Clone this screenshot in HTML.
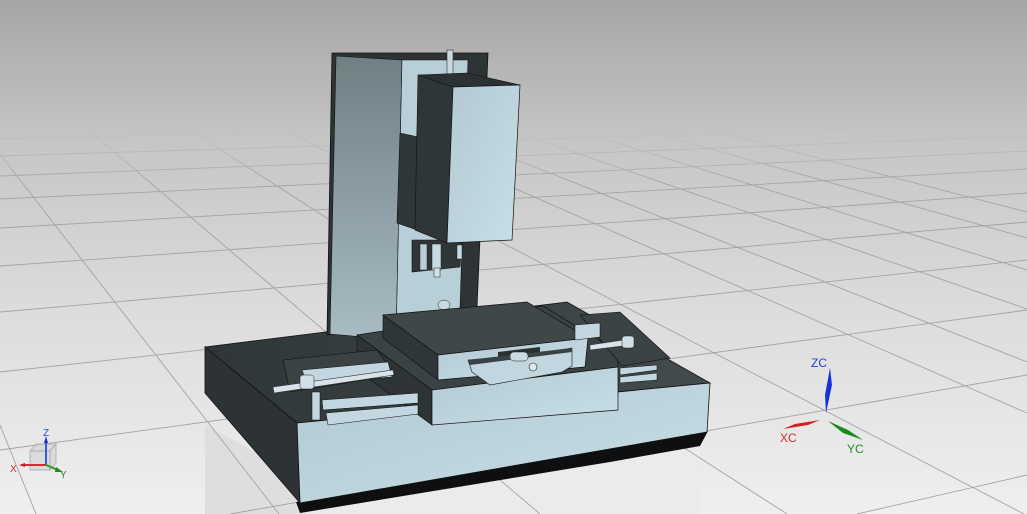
<!DOCTYPE html>
<html><head><meta charset="utf-8"><style>
html,body{margin:0;padding:0;width:1027px;height:514px;overflow:hidden;background:#ddd}
svg{display:block}
text{font-family:"Liberation Sans",sans-serif}
</style></head><body>
<svg width="1027" height="514" viewBox="0 0 1027 514" xmlns="http://www.w3.org/2000/svg">
<defs>
<linearGradient id="bg" x1="0" y1="0" x2="0" y2="1">
<stop offset="0" stop-color="#a6a6a6"/>
<stop offset="0.28" stop-color="#c6c6c6"/>
<stop offset="0.6" stop-color="#dcdcdc"/>
<stop offset="1" stop-color="#efefef"/>
</linearGradient>
<linearGradient id="fade" x1="0" y1="0" x2="0" y2="514" gradientUnits="userSpaceOnUse">
<stop offset="0" stop-color="#fff" stop-opacity="0"/>
<stop offset="0.25" stop-color="#fff" stop-opacity="0"/>
<stop offset="0.36" stop-color="#fff" stop-opacity="1"/>
<stop offset="1" stop-color="#fff" stop-opacity="1"/>
</linearGradient>
<mask id="gm"><rect width="1027" height="514" fill="url(#fade)"/></mask>
<linearGradient id="colL" x1="0" y1="0" x2="0" y2="1">
<stop offset="0" stop-color="#6f7f84"/>
<stop offset="1" stop-color="#a9bcc4"/>
</linearGradient>
<linearGradient id="lt" x1="0" y1="0" x2="1" y2="1">
<stop offset="0" stop-color="#b3c9d2"/>
<stop offset="1" stop-color="#c9dfe8"/>
</linearGradient>
<linearGradient id="dk" x1="0" y1="0" x2="1" y2="0">
<stop offset="0" stop-color="#2f3638"/>
<stop offset="1" stop-color="#434b4d"/>
</linearGradient>
</defs>
<rect width="1027" height="514" fill="url(#bg)"/>
<polygon points="205,425 300,475 300,514 205,514" fill="#dedede"/>
<polygon points="300,495 700,445 700,514 300,514" fill="#ebebeb"/>
<g mask="url(#gm)">
<g stroke="#a4a4a4" stroke-width="0.9" fill="none">
<line x1="0" y1="139" x2="1027" y2="113"/>
<line x1="0" y1="156" x2="1027" y2="124"/>
<line x1="0" y1="176" x2="1027" y2="136"/>
<line x1="0" y1="199" x2="1027" y2="151"/>
<line x1="0" y1="228" x2="1027" y2="169"/>
<line x1="0" y1="266" x2="1027" y2="193"/>
<line x1="0" y1="312" x2="1027" y2="222"/>
<line x1="0" y1="372" x2="1027" y2="260"/>
<line x1="0" y1="450" x2="1027" y2="310"/>
<line x1="230" y1="514" x2="1027" y2="375"/>
<line x1="857" y1="514" x2="1027" y2="475"/>
</g>
<g stroke="#a4a4a4" stroke-width="0.9" fill="none">
<line x1="0" y1="425" x2="36" y2="514"/>
<line x1="0" y1="154" x2="279" y2="514"/>
<line x1="0" y1="55" x2="540" y2="514"/>
<line x1="78" y1="58" x2="787" y2="514"/>
<line x1="160" y1="65" x2="1024" y2="514"/>
<line x1="240" y1="68" x2="1027" y2="413"/>
<line x1="300" y1="74" x2="1027" y2="362"/>
<line x1="360" y1="78" x2="1027" y2="309"/>
<line x1="420" y1="82" x2="1027" y2="270"/>
<line x1="480" y1="84" x2="1027" y2="238"/>
<line x1="540" y1="86" x2="1027" y2="212"/>
</g>
</g>

<polygon points="296,502 708,431 700,446 610,462 300,513" fill="#0d0f10"/>
<polygon points="205,347 567,302 710,383 297,423" fill="url(#dk)" stroke="#111" stroke-width="0.8"/>
<polygon points="205,347 297,423 300,503 205,393" fill="#2d3335" stroke="#111" stroke-width="0.8"/>
<polygon points="297,423 710,383 707,432 300,503" fill="url(#lt)" stroke="#111" stroke-width="0.8"/>

<polygon points="332,53 488,53 477,307 327,335" fill="#2e3436" stroke="#111" stroke-width="0.8"/>
<polygon points="336,56 402,60 396,340 330,334" fill="url(#colL)" stroke="#111" stroke-width="0.6"/>
<polygon points="402,60 468,60 460,308 396,340" fill="#b9cfd8" stroke="#111" stroke-width="0.6"/>
<polygon points="400,133 418,137 417,230 397,223" fill="#2f3638" stroke="#111" stroke-width="0.6"/>
<polygon points="412,240 462,240 460,267 412,272" fill="#2f3638" stroke="#111" stroke-width="0.6"/>
<rect x="420" y="244" width="7" height="26" fill="#b9cfd8" stroke="#222" stroke-width="0.5"/>
<rect x="432" y="244" width="9" height="26" fill="#c7dbe3" stroke="#222" stroke-width="0.5"/>
<rect x="434" y="268" width="6" height="9" fill="#d0e2ea" stroke="#222" stroke-width="0.5"/>
<rect x="457" y="245" width="5" height="14" fill="#c7dbe3" stroke="#222" stroke-width="0.5"/>
<rect x="447" y="50" width="6" height="28" fill="#c8d8de" stroke="#333" stroke-width="0.6"/>
<polygon points="418,75 467,73 520,85 453,87" fill="#2c3234" stroke="#111" stroke-width="0.6"/>
<polygon points="418,75 453,87 447,243 415,230" fill="#2f3638" stroke="#111" stroke-width="0.6"/>
<polygon points="453,87 520,85 512,240 447,243" fill="url(#lt)" stroke="#111" stroke-width="0.7"/>
<ellipse cx="444" cy="305" rx="6" ry="5" fill="#c8d9e0" stroke="#222" stroke-width="0.5"/>

<polygon points="357,335 543,306 618,352 618,367 432,390" fill="#3a4244" stroke="#111" stroke-width="0.7"/>
<polygon points="357,335 432,390 432,425 357,370" fill="#2e3436" stroke="#111" stroke-width="0.6"/>
<polygon points="432,390 618,367 618,410 432,425" fill="url(#lt)" stroke="#111" stroke-width="0.7"/>
<polygon points="580,315 620,312 670,358 622,366" fill="#3a4244" stroke="#111" stroke-width="0.6"/>
<polygon points="383,315 527,302 588,338 438,355" fill="#3f4749" stroke="#111" stroke-width="0.7"/>
<polygon points="383,315 438,355 438,380 383,338" fill="#2f3638" stroke="#111" stroke-width="0.6"/>
<polygon points="438,355 588,338 585,367 438,380" fill="url(#lt)" stroke="#111" stroke-width="0.7"/>
<polygon points="498,352 540,347 540,358 498,362" fill="#2b3133"/>
<polygon points="468,360 500,357 540,353 572,348 572,366 562,372 490,385 472,372" fill="#c2d6df" stroke="#111" stroke-width="0.6"/>
<polygon points="468,360 572,348 572,352 470,365" fill="#3a4244"/>
<rect x="510" y="352" width="18" height="9" rx="4" fill="#c9dae1" stroke="#222" stroke-width="0.5"/>
<circle cx="533" cy="367" r="4" fill="#dce8ee" stroke="#222" stroke-width="0.6"/>

<polygon points="283,360 377,350 395,375 290,392" fill="#3a4244" stroke="#111" stroke-width="0.6"/>
<polygon points="302,370 388,362 392,377 307,383" fill="#c3d7e0" stroke="#111" stroke-width="0.5"/>
<polygon points="322,400 418,393 418,403 323,410" fill="#c3d7e0" stroke="#111" stroke-width="0.5"/>
<polygon points="326,413 418,405 418,414 328,425" fill="#c3d7e0" stroke="#111" stroke-width="0.5"/>
<rect x="312" y="392" width="8" height="28" fill="#c3d7e0" stroke="#111" stroke-width="0.5"/>
<polygon points="273,387 393,370 394,375 274,393" fill="#d8e4e9" stroke="#333" stroke-width="0.6"/>
<rect x="300" y="375" width="14" height="14" rx="3" fill="#d0dee5" stroke="#222" stroke-width="0.5"/>
<polygon points="620,368 657,365 657,370 620,375" fill="#c3d7e0" stroke="#111" stroke-width="0.5"/>
<polygon points="620,377 657,373 657,380 620,383" fill="#c3d7e0" stroke="#111" stroke-width="0.5"/>
<polygon points="575,325 600,323 600,337 575,340" fill="#c3d7e0" stroke="#111" stroke-width="0.5"/>
<polygon points="590,345 630,339 630,345 590,350" fill="#d8e4e9" stroke="#333" stroke-width="0.6"/>
<rect x="622" y="336" width="12" height="12" rx="3" fill="#d0dee5" stroke="#222" stroke-width="0.5"/>

<polygon points="830,368 832,385 826,413 825,395" fill="#1634d4"/>
<text x="811" y="367" font-size="12" fill="#2040e0">ZC</text>
<polygon points="820,420 808,425 783,429 795,424" fill="#d42020"/>
<text x="780" y="442" font-size="12" fill="#d03030">XC</text>
<polygon points="828,421 848,430 863,440 843,433" fill="#1a8a1a"/>
<text x="847" y="453" font-size="12" fill="#2a8a2a">YC</text>

<g stroke="#a8a8a8" stroke-width="0.8" fill="#d0d0d0" fill-opacity="0.6">
<polygon points="30,451 36,444 56,444 50,451"/>
<polygon points="50,451 56,444 56,463 50,470"/>
<rect x="30" y="451" width="20" height="19"/>
</g>
<line x1="46" y1="465" x2="46" y2="441" stroke="#3a5ad8" stroke-width="2"/>
<polygon points="44,443 46,436 48,443" fill="#1634d4"/>
<text x="43" y="436" font-size="10" fill="#2a4ae0">Z</text>
<line x1="46" y1="465" x2="23" y2="465" stroke="#d03030" stroke-width="2"/>
<polygon points="25,463 19,465 25,467" fill="#c02020"/>
<text x="10" y="472" font-size="10" fill="#d03030">X</text>
<line x1="46" y1="465" x2="58" y2="470" stroke="#2a9a2a" stroke-width="2"/>
<polygon points="56,467 63,472 55,472" fill="#1a8a1a"/>
<text x="60" y="478" font-size="10" fill="#2a8a2a">Y</text>
</svg>
</body></html>
